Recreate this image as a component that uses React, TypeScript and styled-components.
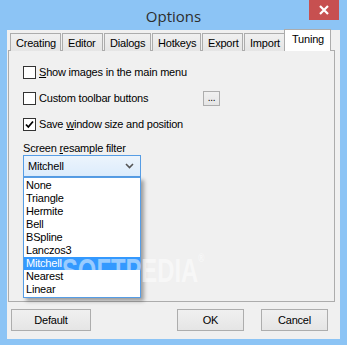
import React, { useState } from "react";
import styled, { createGlobalStyle, css } from "styled-components";

const GlobalStyle = createGlobalStyle`
  html, body {
    margin: 0;
    padding: 0;
    background: #8cc4f5;
  }
  body {
    font-family: "Liberation Sans", Arial, sans-serif;
    font-size: 11px;
    letter-spacing: -0.2px;
    color: #000;
  }
`;

const TABS = ["Creating", "Editor", "Dialogs", "Hotkeys", "Export", "Import", "Tuning"];
const TAB_WIDTHS = [51, 41, 47, 49, 41, 41, 47];

const FILTERS = ["None", "Triangle", "Hermite", "Bell", "BSpline", "Lanczos3", "Mitchell", "Nearest", "Linear"];

export default function App() {
  const [tab, setTab] = useState("Tuning");
  const [filter, setFilter] = useState("Mitchell");
  const [checks, setChecks] = useState([false, false, true]);

  const toggle = (i: number) => setChecks(checks.map((c, j) => (j === i ? !c : c)));

  return (
    <>
      <GlobalStyle />
      <Window>
        <TitleBar>
          <Title>Options</Title>
          <CloseButton>
            <svg width="10" height="10" viewBox="0 0 10 10">
              <path d="M1 1 L9 9 M9 1 L1 9" stroke="#fff" strokeWidth="2.2" />
            </svg>
          </CloseButton>
        </TitleBar>
        <Body>
          <TabStrip>
            {TABS.map((t, i) => (
              <Tab key={t} selected={t === tab} style={{ width: TAB_WIDTHS[i] }} onClick={() => setTab(t)}>
                {t}
              </Tab>
            ))}
          </TabStrip>
          <Panel>
            <CheckRow onClick={() => toggle(0)}>
              <CheckBox>{checks[0] && <CheckMark />}</CheckBox>
              <span>
                <u>S</u>how images in the main menu
              </span>
            </CheckRow>
            <CheckRow>
              <CheckBox onClick={() => toggle(1)}>{checks[1] && <CheckMark />}</CheckBox>
              <CustomLabel>Custom toolbar buttons</CustomLabel>
              <SmallButton>...</SmallButton>
            </CheckRow>
            <CheckRow onClick={() => toggle(2)}>
              <CheckBox>{checks[2] && <CheckMark />}</CheckBox>
              <span>
                Save <u>w</u>indow size and position
              </span>
            </CheckRow>
            <FieldLabel>
              Screen <u>r</u>esample filter
            </FieldLabel>
            <ComboWrap>
              <Combo>
                <span>{filter}</span>
                <svg width="9" height="6" viewBox="0 0 9 6">
                  <path d="M1 1 L4.5 4.5 L8 1" stroke="#555" strokeWidth="1.6" fill="none" />
                </svg>
              </Combo>
              <DropList>
                {FILTERS.map((f) => (
                  <DropItem key={f} active={f === filter} onClick={() => setFilter(f)}>
                    {f}
                  </DropItem>
                ))}
              </DropList>
            </ComboWrap>
          </Panel>
          <ButtonRow>
            <DialogButton width={80}>Default</DialogButton>
            <Spacer />
            <DialogButton width={67}>OK</DialogButton>
            <DialogButton width={67}>Cancel</DialogButton>
          </ButtonRow>
        </Body>
        <Watermark>
          SOFTPEDIA<sup>®</sup>
        </Watermark>
      </Window>
    </>
  );
}

function CheckMark() {
  return (
    <svg width="9" height="9" viewBox="0 0 9 9">
      <path d="M1 4.5 L3.3 7 L8 1.5" stroke="#000" strokeWidth="1.8" fill="none" />
    </svg>
  );
}

const Window = styled.div`
  position: relative;
  width: 347px;
  height: 345px;
  background: #8cc4f5;
  display: flex;
  flex-direction: column;
  box-sizing: border-box;
  padding: 0 7px 6px 7px;
  overflow: hidden;
`;

const TitleBar = styled.div`
  height: 30px;
  display: flex;
  align-items: center;
  justify-content: center;
  position: relative;
`;

const Title = styled.div`
  font-family: "Open Sans", "Noto Sans", sans-serif;
  font-size: 15px;
  letter-spacing: 0;
  color: #2d2d2d;
  margin-top: 1px;
`;

const CloseButton = styled.div`
  position: absolute;
  top: 0;
  right: 1px;
  width: 30px;
  height: 20px;
  background: #c75050;
  display: flex;
  align-items: center;
  justify-content: center;
`;

const Body = styled.div`
  flex: 1;
  background: #f0f0f0;
  display: flex;
  flex-direction: column;
  padding: 0 5px 7px 1px;
`;

const TabStrip = styled.div`
  display: flex;
  align-items: flex-end;
  height: 21px;
  padding-left: 2px;
  margin-bottom: -1px;
  position: relative;
  z-index: 1;
`;

const Tab = styled.div<{ selected: boolean }>`
  box-sizing: border-box;
  height: 18px;
  margin-right: 1px;
  border: 1px solid #acacac;
  border-bottom: none;
  background: linear-gradient(#f0f0f0, #e5e5e5);
  padding-left: 5px;
  display: flex;
  align-items: center;
  white-space: nowrap;
  cursor: default;

  ${(p) =>
    p.selected &&
    css`
      height: 22px;
      margin-right: 0;
      margin-left: -2px;
      background: #fff;
      padding-left: 7px;
      padding-bottom: 3px;
      z-index: 2;
    `}
`;

const Panel = styled.div`
  position: relative;
  height: 252px;
  box-sizing: border-box;
  border: 1px solid #acacac;
  background: #f0f0f0;
  padding: 8px 0 0 14px;
  display: flex;
  flex-direction: column;
`;

const CheckRow = styled.div`
  height: 26px;
  display: flex;
  align-items: center;
  gap: 3px;
  cursor: default;
`;

const CheckBox = styled.div`
  width: 13px;
  height: 13px;
  box-sizing: border-box;
  border: 1px solid #333;
  background: #fff;
  display: flex;
  align-items: center;
  justify-content: center;
`;

const CustomLabel = styled.span`
  width: 161px;
`;

const SmallButton = styled.div`
  width: 17px;
  height: 15px;
  box-sizing: border-box;
  border: 1px solid #adadad;
  background: linear-gradient(#f0f0f0, #e5e5e5);
  font-size: 10px;
  line-height: 12px;
  text-align: center;
`;

const FieldLabel = styled.div`
  margin-top: 4px;
  height: 14px;
  line-height: 14px;
`;

const ComboWrap = styled.div`
  position: relative;
  width: 118px;
`;

const Combo = styled.div`
  height: 22px;
  box-sizing: border-box;
  border: 1px solid #569de5;
  background: linear-gradient(#ecf4fc, #dcecfc);
  display: flex;
  align-items: center;
  justify-content: space-between;
  padding: 0 6px 0 4px;
`;

const DropList = styled.div`
  position: absolute;
  top: 22px;
  left: 0;
  width: 118px;
  box-sizing: border-box;
  border: 1px solid #569de5;
  background: #fff;
  padding: 1px 0;
  box-shadow: 3px 3px 4px rgba(0, 0, 0, 0.35);
  z-index: 3;
`;

const DropItem = styled.div<{ active: boolean }>`
  height: 13px;
  line-height: 13px;
  padding-left: 2px;
  cursor: default;
  ${(p) =>
    p.active &&
    css`
      background: #3399ff;
      color: #fff;
    `}
`;

const ButtonRow = styled.div`
  display: flex;
  align-items: center;
  margin-top: 7px;
  padding: 0 7px 0 3px;
  gap: 17px;
`;

const Spacer = styled.div`
  flex: 1;
`;

const DialogButton = styled.div<{ width: number }>`
  width: ${(p) => p.width}px;
  height: 22px;
  box-sizing: border-box;
  border: 1px solid #adadad;
  background: linear-gradient(#f0f0f0, #e5e5e5);
  display: flex;
  align-items: center;
  justify-content: center;
`;

const Watermark = styled.div`
  position: absolute;
  left: 62px;
  top: 251px;
  font-family: "Liberation Sans", Arial, sans-serif;
  font-weight: bold;
  font-size: 34px;
  letter-spacing: 0;
  color: rgba(255, 255, 255, 0.5);
  pointer-events: none;
  z-index: 5;
  transform: scaleX(0.7);
  transform-origin: left top;

  sup {
    font-size: 12px;
    vertical-align: top;
  }
`;
